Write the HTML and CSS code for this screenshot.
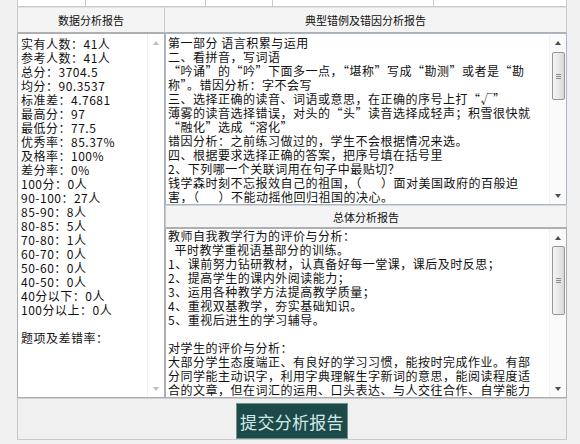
FILE: index.html
```html
<!DOCTYPE html>
<html lang="zh-CN">
<head>
<meta charset="utf-8">
<title>分析报告</title>
<link rel="stylesheet" href="styles.css">
</head>
<body>
<div class="wrap">
  <div class="strip">
    <span class="c1"></span><span class="c2"></span><span class="c3"></span><span class="c4"></span><span class="c5"></span>
  </div>
  <div class="grid">
    <div class="hd hl">数据分析报告</div>
    <div class="hd hr">典型错例及错因分析报告</div>
    <div class="tb tb-left">
      <div class="txt txt-left">实有人数：41人
参考人数：41人
总分：3704.5
均分：90.3537
标准差：4.7681
最高分：97
最低分：77.5
优秀率：85.37%
及格率：100%
差分率：0%
100分：0人
90-100：27人
85-90：8人
80-85：5人
70-80：1人
60-70：0人
50-60：0人
40-50：0人
40分以下：0人
100分以上：0人

题项及差错率：</div>
      <div class="sb sb-off">
        <div class="arr"><i class="up"></i></div>
        <div class="track"></div>
        <div class="arr"><i class="down"></i></div>
      </div>
    </div>
    <div class="rcol">
      <div class="tb tb-r1">
        <div class="txt txt-r1">第一部分 语言积累与运用
二、看拼音，写词语
“吟诵”的“吟”下面多一点，“堪称”写成“勘测”或者是“勘
称”。错因分析：字不会写
三、选择正确的读音、词语或意思，在正确的序号上打“√”
薄雾的读音选择错误，对头的“头”读音选择成轻声；积雪很快就
“融化”选成“溶化”
错因分析：之前练习做过的，学生不会根据情况来选。
四、根据要求选择正确的答案，把序号填在括号里
2、下列哪一个关联词用在句子中最贴切？
钱学森时刻不忘报效自己的祖国，（　  ）面对美国政府的百般迫
害，（　  ）不能动摇他回归祖国的决心。</div>
        <div class="sb">
          <div class="arr"><i class="up"></i></div>
          <div class="track"><div class="thumb thumb-1"><b></b><b></b><b></b></div></div>
          <div class="arr"><i class="down"></i></div>
        </div>
      </div>
      <div class="hd hd2">总体分析报告</div>
      <div class="tb tb-r2">
        <div class="txt txt-r2">教师自我教学行为的评价与分析：
  平时教学重视语基部分的训练。
1、课前努力钻研教材，认真备好每一堂课，课后及时反思；
2、提高学生的课内外阅读能力；
3、运用各种教学方法提高教学质量；
4、重视双基教学，夯实基础知识。
5、重视后进生的学习辅导。

对学生的评价与分析：
大部分学生态度端正、有良好的学习习惯，能按时完成作业。有部
分同学能主动识字，利用字典理解生字新词的意思，能阅读程度适
合的文章，但在词汇的运用、口头表达、与人交往合作、自学能力</div>
        <div class="sb">
          <div class="arr"><i class="up"></i></div>
          <div class="track"><div class="thumb thumb-2"><b></b><b></b><b></b></div></div>
          <div class="arr"><i class="down"></i></div>
        </div>
      </div>
    </div>
    <div class="foot">
      <button class="submit" type="button">提交分析报告</button>
    </div>
  </div>
</div>
</body>
</html>
```

FILE: styles.css
```css
html, body {
  margin: 0;
  padding: 0;
}
body {
  background: #f0f0f0;
  font-family: "Noto Sans CJK SC", "Noto Sans", sans-serif;
  color: #000;
  width: 580px;
  height: 444px;
  overflow: hidden;
}
.wrap {
  margin-left: 17px;
  width: 550px;
}
.strip {
  display: flex;
  height: 6px;
  border-bottom: 1px solid #c9c9c9;
}
.strip span {
  background: #fff;
  border-left: 1px solid #c9c9c9;
  box-sizing: border-box;
}
.strip .c1 { width: 68px; }
.strip .c2 { width: 120px; }
.strip .c3 { width: 67px; }
.strip .c4 { width: 161px; }
.strip .c5 { width: 134px; border-right: 1px solid #c9c9c9; }

.grid {
  display: grid;
  grid-template-columns: 148px 402px;
  grid-template-rows: 26px 365px 42px;
}
.hd {
  background: #f4f4f4;
  border-bottom: 1px solid #b0b0b0;
  border-top: 1px solid #e2e2e2;
  font-size: 11px;
  display: flex;
  align-items: center;
  justify-content: center;
  box-sizing: border-box;
  color: #111;
}
.hl {
  border-left: 1px solid #c9c9c9;
  border-right: 1px solid #c9c9c9;
}
.hr {
  border-right: 1px solid #c9c9c9;
}
.hd2 {
  height: 23px;
  border-left: 1px solid #c9c9c9;
  border-right: 1px solid #c9c9c9;
  border-top: 1px solid #d6d6d6;
  flex: none;
}
.rcol {
  display: flex;
  flex-direction: column;
  min-height: 0;
}
.tb {
  display: flex;
  background: #fff;
  border: 1px solid #abadb3;
  box-sizing: border-box;
  min-height: 0;
}
.tb-left {
  height: 365px;
}
.tb-r1 {
  height: 172px;
  flex: none;
  border-color: #a9b8c9;
}
.tb-r2 {
  height: 170px;
  flex: none;
}
.txt {
  flex: 1;
  min-width: 0;
  white-space: pre;
  font-size: 12px;
  letter-spacing: 0.5px;
  line-height: 14px;
  padding: 3px 0 0 2px;
  color: #111;
}
.txt-left {
  padding-left: 3px;
}
.txt-r1 {
  padding-top: 2px;
}
.txt-r2 {
  padding-top: 0;
}
.sb {
  width: 16px;
  flex: none;
  display: flex;
  flex-direction: column;
  background: #fafafa;
  border-left: 1px solid #f0f0f0;
}
.arr {
  height: 17px;
  flex: none;
  display: flex;
  align-items: center;
  justify-content: center;
}
.arr i {
  display: block;
  width: 0;
  height: 0;
  border-left: 3px solid transparent;
  border-right: 3px solid transparent;
}
.arr i.up {
  border-bottom: 4px solid #4e4e4e;
}
.arr i.down {
  border-top: 4px solid #4e4e4e;
}
.sb-off .arr i.up {
  border-bottom-color: #bdbdbd;
}
.sb-off .arr i.down {
  border-top-color: #bdbdbd;
}
.sb-off {
  background: #fff;
}
.track {
  flex: 1;
  display: flex;
  flex-direction: column;
  align-items: center;
}
.thumb {
  width: 13px;
  box-sizing: border-box;
  border: 1px solid #979797;
  border-radius: 2px;
  background: linear-gradient(to right, #f4f4f4, #e6e6e6 60%, #d9d9d9);
  display: flex;
  flex-direction: column;
  align-items: center;
  justify-content: center;
  gap: 1px;
}
.thumb b {
  display: block;
  width: 5px;
  height: 1px;
  background: #8c8c8c;
}
.thumb-1 {
  margin-top: 1px;
  height: 48px;
}
.thumb-2 {
  margin-top: 0;
  height: 69px;
}
.foot {
  grid-column: 1 / 3;
  border: 1px solid #c9c9c9;
  border-top-color: #d0d0d0;
  display: flex;
  justify-content: center;
  align-items: flex-start;
  padding-top: 4px;
  box-sizing: border-box;
  background: #f0f0f0;
}
.submit {
  width: 112px;
  height: 36px;
  margin: 0;
  padding: 0;
  background: #1c4a48;
  border: 1px solid #72908e;
  color: #d3e9e7;
  font-family: "Noto Sans CJK SC", sans-serif;
  font-size: 17px;
  letter-spacing: 0.3px;
}
```
